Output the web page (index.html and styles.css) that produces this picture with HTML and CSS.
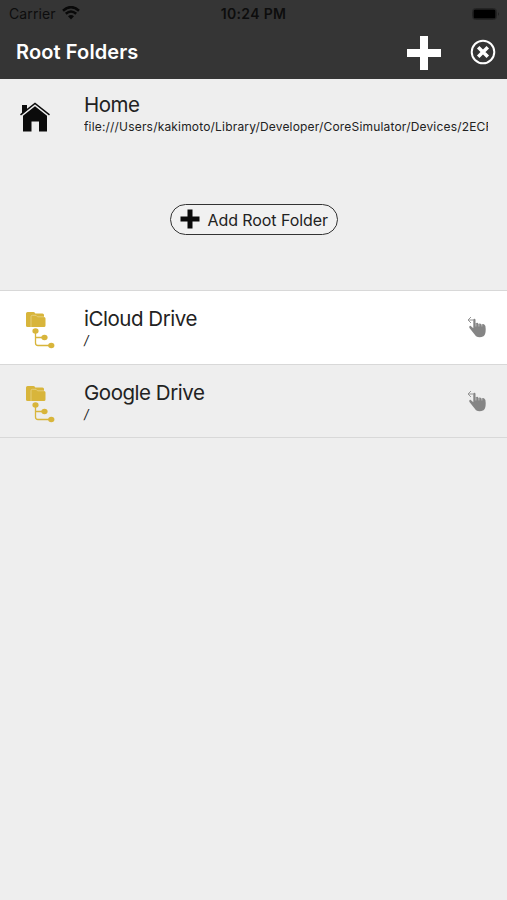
FILE: index.html
```html
<!DOCTYPE html>
<html lang="en">
<head>
<meta charset="utf-8">
<title>Root Folders</title>
<link rel="stylesheet" href="styles.css">
</head>
<body>
<svg class="defs" aria-hidden="true">
  <symbol id="tree" viewBox="0 0 32 40">
    <path d="M1 15V2.600Q1 1 2.600 1H8.500Q10 1 10.300 2.500H17.500Q19 2.500 19 4V6H1Z"/>
    <path d="M1 5H6V16H2.500Q1 16 1 14.500Z"/>
    <path d="M6 16V6Q6 4.500 7.500 4.500H11L12.500 6H19Q20.500 6 20.500 7.500V14.500Q20.500 16 19 16Z"/>
    <path d="M6 16V5.700Q6 4.300 7.500 4.300H11L12.500 5.800H19" fill="none" stroke="#ead796" stroke-width=".7"/>
    <path d="M10.500 20V32Q10.500 34.500 13 34.500H25M10.500 26.500H19" fill="none" stroke="#d8b53b" stroke-width="1.300"/>
    <ellipse cx="10.500" cy="20" rx="3.100" ry="2.700"/><ellipse cx="19.500" cy="26.500" rx="3.100" ry="2.700"/><ellipse cx="26.300" cy="34.500" rx="3.100" ry="2.700"/>
  </symbol>
  <symbol id="hand" viewBox="0 0 20 22">
    <path d="M4 1L1 4L4 7M1 4H6.500" fill="none" stroke="#969696" stroke-width="1"/>
    <path d="M6.300 4Q6.300 2.800 7.400 2.800T8.500 4V7.500Q10.700 6 11.400 8Q13.500 6.800 14.300 8.700Q16.300 7.300 17.500 8.800Q18.800 9.500 18.700 13.500Q18.700 18.500 16.500 20.300Q12.500 22.200 9 20.300L2.500 12Q1.700 10 3.500 9.800L6.300 12.200Z"/>
    <path d="M8.900 7.500V10.500M11.900 8V10.500M14.900 8.500V10.500" stroke="#d5d5d5" stroke-width=".7"/>
  </symbol>
</svg>
<header class="header">
  <div class="status">
    <div class="carrier"><span class="carrier-name">Carrier</span>
      <svg class="wifi" viewBox="0 0 18 14"><path d="M1 4.700Q9-2.500 17 4.700M3.800 7.800Q9 3.300 14.200 7.800" fill="none" stroke="#090909" stroke-width="2.500"/><path d="M6 10.300Q9 7.800 12 10.300L9 13.500Z" fill="#090909"/></svg>
    </div>
    <span class="time">10:24 PM</span>
    <svg class="battery" viewBox="0 0 28 12"><rect x=".5" y=".5" width="24" height="11" rx="3" fill="none" stroke="#242424"/><rect x="1.500" y="1.500" width="22" height="9" rx="1.500" fill="#000"/><path d="M26 4Q27.500 6 26 8Z" fill="#181818"/></svg>
  </div>
  <div class="nav">
    <h1 class="title">Root Folders</h1>
    <svg class="add" viewBox="0 0 34 34"><path d="M13 0H21V13H34V21H21V34H13V21H0V13H13Z" fill="#fff"/></svg>
    <svg class="close" viewBox="0 0 26 26" fill="none" stroke="#fff"><circle cx="13" cy="13" r="11.300" stroke-width="2"/><path d="M8.200 8.200L17.800 17.800M17.800 8.200L8.200 17.800" stroke-width="3.500"/></svg>
  </div>
</header>
<main>
  <section class="row home">
    <svg class="house" viewBox="0 0 32 32"><path d="M3 4H8V9L3 13.500ZM4 14.800L16 5.200L28 14.800V30.500H20V20.500H12.500V30.500H4Z" fill="#0b0b0b"/><path d="M1.500 13.800L16 2.500L30.500 13.800" fill="none" stroke="#0b0b0b" stroke-width="1.500"/></svg>
    <div class="text"><div class="name">Home</div><div class="path">file:///Users/kakimoto/Library/Developer/CoreSimulator/Devices/2ECF</div></div>
  </section>
  <div class="actions">
    <button class="add-root"><svg class="small-plus" viewBox="0 0 20 20"><path d="M7.500 0.500H12.500V7.500H19.500V12.500H12.500V19.500H7.500V12.500H.5V7.500H7.500Z" fill="#0b0b0b"/></svg><span>Add Root Folder</span></button>
  </div>
  <section class="row drive white">
    <svg class="tree"><use href="#tree"/></svg>
    <div class="text"><div class="name">iCloud Drive</div><div class="slash">/</div></div>
    <svg class="hand"><use href="#hand"/></svg>
  </section>
  <section class="row drive">
    <svg class="tree"><use href="#tree"/></svg>
    <div class="text"><div class="name">Google Drive</div><div class="slash">/</div></div>
    <svg class="hand"><use href="#hand"/></svg>
  </section>
</main>
</body>
</html>
```
FILE: styles.css
```css
* { box-sizing: border-box; }
body { margin: 0; min-height: 900px; background: #eee; color: #222; font-family: Inter, "Liberation Sans", sans-serif; overflow: hidden; }
svg { display: block; flex: none; }
.defs { display: none; }
.header { height: 79px; background: #353535; }
.status { height: 27px; display: grid; grid-template-columns: 1fr auto 1fr; align-items: center; padding: 1px 7px 0 9px; color: #0d0d0d; }
.carrier { display: flex; align-items: center; gap: 6px; font-size: 14px; line-height: 18px; }
.carrier-name { width: 47px; letter-spacing: .1px; }
.wifi { width: 18px; height: 14px; margin-top: -2px; }
.time { margin-right: 2px; font-size: 14px; font-weight: 600; line-height: 18px; letter-spacing: .35px; }
.battery { width: 28px; height: 12px; justify-self: end; margin-top: -1px; }
.nav { height: 52px; display: flex; align-items: center; padding: 0 11.5px 0 16px; }
.title { margin: -2px auto 0 0; color: #fff; font-size: 20px; line-height: 24px; font-weight: 600; letter-spacing: .12px; white-space: nowrap; }
.add { width: 34px; height: 34px; margin-right: 28.5px; }
.close { width: 26px; height: 26px; margin-top: -3px; }
.row { display: flex; align-items: flex-start; }
.home { height: 77px; padding: 13px 19px 0; }
.house { width: 32px; height: 32px; margin: 9px 33px 0 0; }
.text { flex: 1; min-width: 0; }
.name { font-size: 20.5px; line-height: 26px; letter-spacing: -.47px; white-space: nowrap; }
.path { width: 404px; overflow: hidden; white-space: nowrap; font-size: 12px; line-height: 17px; letter-spacing: .18px; }
.actions { height: 134px; padding-top: 48px; display: flex; justify-content: center; align-items: flex-start; }
.add-root { width: 168px; height: 31px; display: flex; align-items: center; gap: 8px; padding: 0 0 0 9px; border: 1.5px solid #333; border-radius: 16px; background: #f1f1f1; color: #222; font: 16px/24px Inter, sans-serif; letter-spacing: -.08px; white-space: nowrap; }
.small-plus { width: 20px; height: 20px; margin-top: -2px; }
.drive { height: 73px; padding: 15px 20px 0 24px; border-bottom: 1px solid #d8d8d8; }
.white { height: 75px; background: #fff; border-top: 1px solid #d8d8d8; }
.tree { width: 32px; height: 40px; margin: 5px 27px 0 1px; fill: #d8b53b; }
.slash { font-size: 13px; line-height: 17px; font-style: italic; }
.hand { width: 20px; height: 22px; margin-top: 10px; fill: #858585; }
```
